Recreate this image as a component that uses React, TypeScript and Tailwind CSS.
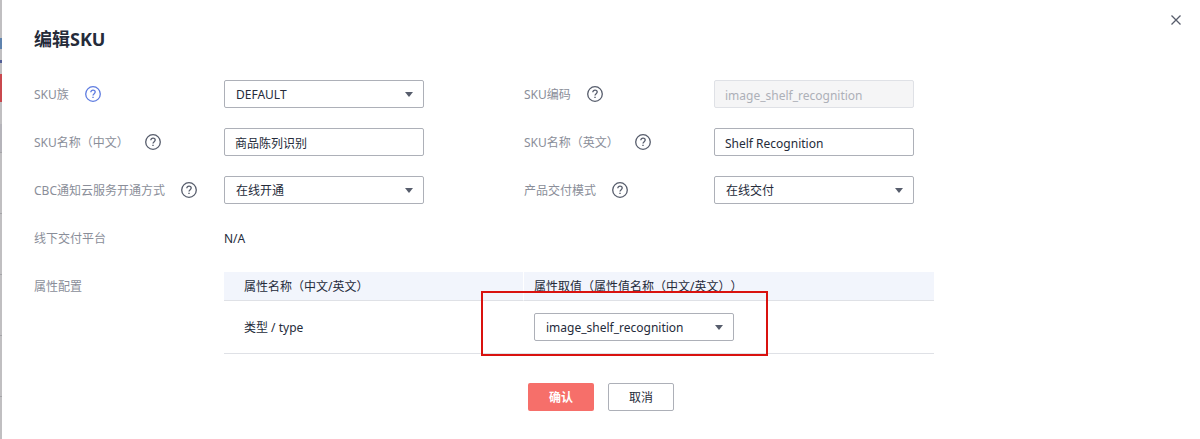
import type { ReactNode } from 'react';

const controlClass =
  'block h-7 w-full rounded-[2px] border border-[#adb0b8] bg-white pt-[2px] text-xs text-[#252b3a] outline-none';

function HelpIcon({ active = false }: { active?: boolean }) {
  return (
    <svg
      viewBox="0 0 16 16"
      className={active ? 'size-4 shrink-0 text-[#5e7ce0]' : 'size-4 shrink-0 text-[#575d6c]'}
      fill="none"
      stroke="currentColor"
      strokeWidth="1.3"
      aria-hidden="true"
    >
      <circle cx="8" cy="8" r="7.3" />
      <path d="M5.8 6.3C5.8 4.9 6.8 4.1 8 4.1s2.2.8 2.2 2c0 1.5-2.2 1.7-2.2 3.5" />
      <path d="M8 10.7v1.4" strokeWidth="1.4" />
    </svg>
  );
}

function SelectBox({ id, value, label }: { id: string; value: string; label?: string }) {
  return (
    <div className="relative w-full">
      <select
        id={id}
        aria-label={label}
        defaultValue={value}
        className={`${controlClass} appearance-none pl-[11px] pr-7`}
      >
        <option value={value}>{value}</option>
      </select>
      <svg
        viewBox="0 0 8 5"
        className="pointer-events-none absolute right-[11px] top-3 h-[5px] w-2 fill-[#575d6c]"
        aria-hidden="true"
      >
        <path d="M0 0h8L4 5z" />
      </svg>
    </div>
  );
}

type FieldLabelProps = {
  htmlFor?: string;
  help?: boolean;
  active?: boolean;
  children: ReactNode;
};

function FieldLabel({ htmlFor, help = false, active = false, children }: FieldLabelProps) {
  return (
    <div className="flex h-7 items-center gap-4 whitespace-nowrap text-[#8a8e99]">
      {htmlFor ? (
        <label htmlFor={htmlFor} className="pt-[2px]">{children}</label>
      ) : (
        <span className="pt-[2px]">{children}</span>
      )}
      {help && <HelpIcon active={active} />}
    </div>
  );
}

// Sliver of the page that stays visible behind the panel
function Backdrop() {
  return (
    <div className="flex w-[2px] shrink-0 flex-col bg-[#c0bfc1]">
      <div className="h-[38px]" />
      <div className="h-[11px] bg-[#5f83ae]" />
      <div className="h-[11px]" />
      <div className="h-[3px] bg-[#535f96]" />
      <div className="h-[11px]" />
      <div className="h-7 bg-[#c9484e]" />
      <div className="h-[22px]" />
      <div className="h-7 bg-[#b5b4ba]" />
      {[0, 1, 2, 3, 4].map((row) => (
        <div key={row} className="h-[61px] border-t border-[#a5a5a8]" />
      ))}
    </div>
  );
}

export default function App() {
  return (
    <div className="flex min-h-screen bg-white font-['Noto_Sans','Noto_Sans_CJK_SC',sans-serif] text-xs text-[#252b3a] [text-spacing-trim:space-all]">
      <Backdrop />
      <main className="min-w-0 flex-1 px-8">
        <header className="flex h-20 justify-between">
          <h1 className="pt-[25px] text-lg leading-7 font-bold">编辑SKU</h1>
          <button type="button" aria-label="关闭" className="-mr-7 flex size-10 items-center justify-center">
            <svg viewBox="0 0 10 10" className="size-[10px] stroke-[#575d6c]" strokeWidth="1.3" aria-hidden="true">
              <path d="M.5.5l9 9M9.5.5l-9 9" />
            </svg>
          </button>
        </header>

        <form>
          <div className="grid grid-cols-[190px_200px_100px_190px_200px] gap-y-5">
            <FieldLabel htmlFor="family" help active>SKU族</FieldLabel>
            <SelectBox id="family" value="DEFAULT" />
            <div />
            <FieldLabel htmlFor="code" help>SKU编码</FieldLabel>
            <input
              id="code"
              disabled
              defaultValue="image_shelf_recognition"
              className="block h-7 w-full rounded-[2px] border border-[#dfe1e6] bg-[#f5f5f6] px-[10px] pt-[2px] text-xs text-[#adb0b8]"
            />

            <FieldLabel htmlFor="name-zh" help>SKU名称（中文）</FieldLabel>
            <input id="name-zh" defaultValue="商品陈列识别" className={`${controlClass} px-[10px]`} />
            <div />
            <FieldLabel htmlFor="name-en" help>SKU名称（英文）</FieldLabel>
            <input id="name-en" defaultValue="Shelf Recognition" className={`${controlClass} px-[10px]`} />

            <FieldLabel htmlFor="open-mode" help>CBC通知云服务开通方式</FieldLabel>
            <SelectBox id="open-mode" value="在线开通" />
            <div />
            <FieldLabel htmlFor="delivery" help>产品交付模式</FieldLabel>
            <SelectBox id="delivery" value="在线交付" />

            <FieldLabel>线下交付平台</FieldLabel>
            <div className="flex h-7 items-center pt-[2px]">N/A</div>
          </div>

          <div className="mt-5 flex">
            <div className="w-[190px] shrink-0">
              <FieldLabel>属性配置</FieldLabel>
            </div>
            <table className="w-full max-w-[710px] table-fixed border-separate border-spacing-0 text-left">
              <thead>
                <tr className="h-[29px] bg-[#f2f5fc]">
                  <th className="w-[300px] border-r border-b border-r-white border-b-[#dfe1e6] pt-[2px] pb-0 pl-5 font-normal">
                    属性名称（中文/英文）
                  </th>
                  <th className="border-b border-[#dfe1e6] pt-[2px] pb-0 pl-[10px] font-normal">
                    属性取值（属性值名称（中文/英文））
                  </th>
                </tr>
              </thead>
              <tbody>
                <tr className="h-[53px]">
                  <td className="border-b border-[#dfe1e6] pt-[2px] pb-0 pl-5">类型 / type</td>
                  <td className="border-b border-[#dfe1e6] py-0 pl-[10px]">
                    <div className="relative w-[200px]">
                      <SelectBox id="type" value="image_shelf_recognition" label="类型 / type" />
                      <div className="pointer-events-none absolute -top-[22px] -right-[34px] -bottom-[15px] -left-[53px] border-2 border-[#d9120f]" />
                    </div>
                  </td>
                </tr>
              </tbody>
            </table>
          </div>

          <div className="mt-[29px] flex justify-center gap-[14px] pb-7">
            <button type="button" className="h-7 w-[66px] rounded-[2px] bg-[#f66f6a] pt-[2px] font-bold text-white">
              确认
            </button>
            <button type="button" className="h-7 w-[66px] rounded-[2px] border border-[#adb0b8] bg-white pt-[2px]">
              取消
            </button>
          </div>
        </form>
      </main>
    </div>
  );
}
